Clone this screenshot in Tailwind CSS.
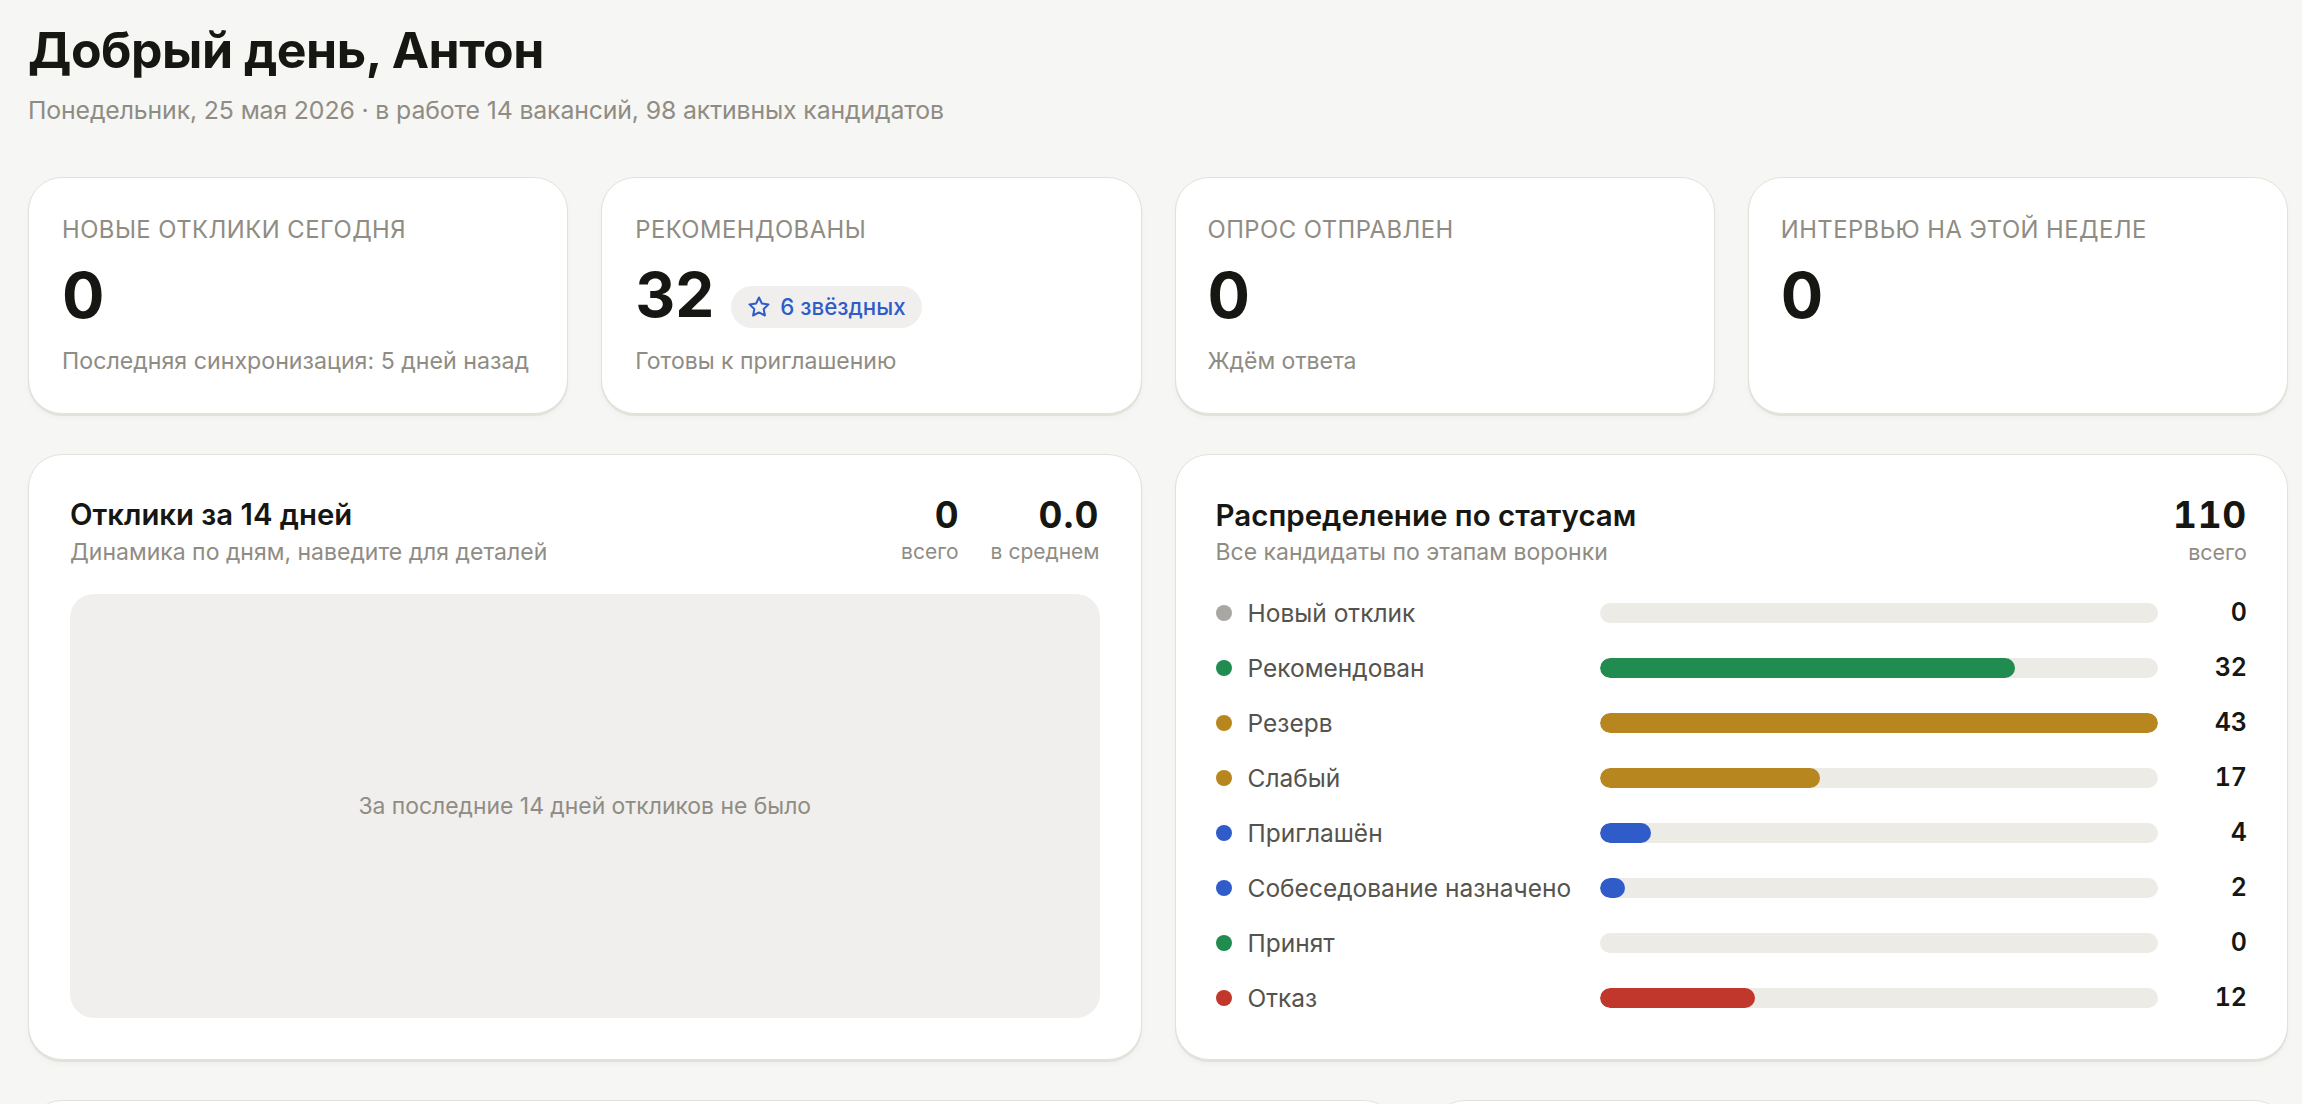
<!doctype html>
<html lang="ru"><head><meta charset="utf-8"><script src="https://cdn.jsdelivr.net/npm/@tailwindcss/browser@4"></script><title>Дашборд</title></head>
<body class="bg-[#f6f6f4] h-[1104px] overflow-hidden font-['Inter','Noto_Sans',sans-serif] text-[#161612]">
<main class="h-[1104px] overflow-hidden pl-[28px] pr-[14px]">
<header class="pt-[23px] h-[177px]">
<h1 class="text-[50px] leading-[54px] font-bold tracking-[-0.01em]">Добрый день, Антон</h1>
<p class="mt-[17px] text-[24.8px] leading-[32px] text-[#8f8c84] tracking-[-0.005em]">Понедельник, 25 мая 2026 · в работе 14 вакансий, 98 активных кандидатов</p>
</header>
<section class="grid grid-cols-4 gap-[33px]">
<div class="h-[237px] rounded-[34px] bg-white border-[1.5px] border-[#e3e1da] shadow-[0_2px_0_#e3e1da,0_4px_6px_rgba(0,0,0,0.03)] pl-[33px] pr-[30px] pt-[37px]">
<div class="text-[23.8px] leading-[30px] tracking-[0.02em] text-[#8f8c84]">НОВЫЕ ОТКЛИКИ СЕГОДНЯ</div>
<div class="mt-[14px] h-[72px] text-[63px] leading-[72px] font-bold">0</div>
<div class="mt-[15px] text-[23.2px] leading-[30px] text-[#8f8c84]">Последняя синхронизация: 5 дней назад</div>
</div>
<div class="h-[237px] rounded-[34px] bg-white border-[1.5px] border-[#e3e1da] shadow-[0_2px_0_#e3e1da,0_4px_6px_rgba(0,0,0,0.03)] pl-[33px] pr-[30px] pt-[37px]">
<div class="text-[23.8px] leading-[30px] tracking-[0.02em] text-[#8f8c84]">РЕКОМЕНДОВАНЫ</div>
<div class="mt-[14px] h-[72px] flex items-center gap-[17px]">
<span class="text-[62px] leading-[72px] font-bold">32</span>
<span class="mt-[24px] h-[42px] rounded-full bg-[#f0efed] px-[16px] flex items-center gap-[9px] text-[22.3px] font-medium text-[#2f5cc8] whitespace-nowrap">
<svg class="w-[24px] h-[24px]" viewBox="0 0 24 24" fill="none" stroke="#2f5cc8" stroke-width="2" stroke-linejoin="round"><path d="M12 2.500l2.900 6 6.600.9-4.800 4.600 1.200 6.500L12 17.400l-5.900 3.100 1.200-6.500L2.500 9.400l6.600-.9z"/></svg>6 звёздных</span>
</div>
<div class="mt-[15px] text-[23px] leading-[30px] text-[#8f8c84]">Готовы к приглашению</div>
</div>
<div class="h-[237px] rounded-[34px] bg-white border-[1.5px] border-[#e3e1da] shadow-[0_2px_0_#e3e1da,0_4px_6px_rgba(0,0,0,0.03)] px-[32px] pt-[37px]">
<div class="text-[23.8px] leading-[30px] tracking-[0.02em] text-[#8f8c84]">ОПРОС ОТПРАВЛЕН</div>
<div class="mt-[14px] h-[72px] text-[63px] leading-[72px] font-bold">0</div>
<div class="mt-[15px] text-[23px] leading-[30px] text-[#8f8c84]">Ждём ответа</div>
</div>
<div class="h-[237px] rounded-[34px] bg-white border-[1.5px] border-[#e3e1da] shadow-[0_2px_0_#e3e1da,0_4px_6px_rgba(0,0,0,0.03)] px-[32px] pt-[37px]">
<div class="text-[23.8px] leading-[30px] tracking-[0.02em] text-[#8f8c84]">ИНТЕРВЬЮ НА ЭТОЙ НЕДЕЛЕ</div>
<div class="mt-[14px] h-[72px] text-[63px] leading-[72px] font-bold">0</div>
</div>
</section>
<section class="mt-[40px] grid grid-cols-2 gap-[33px]">
<div class="h-[606px] rounded-[34px] bg-white border-[1.5px] border-[#e3e1da] shadow-[0_2px_0_#e3e1da,0_4px_6px_rgba(0,0,0,0.03)] px-[41px] pt-[42px] flex flex-col">
<div class="flex justify-between">
<div>
<h2 class="text-[29.300px] leading-[36px] font-semibold">Отклики за 14 дней</h2>
<p class="mt-[4px] text-[23px] leading-[30px] text-[#8f8c84]">Динамика по дням, наведите для деталей</p>
</div>
<div class="flex gap-[32px] text-right">
<div><div class="text-[37px] leading-[36px] font-bold tabular-nums">0</div><div class="mt-[4px] text-[21px] leading-[30px] text-[#8f8c84]">всего</div></div>
<div><div class="text-[37px] leading-[36px] font-bold tabular-nums tracking-[0.03em]">0.0</div><div class="mt-[4px] text-[21px] leading-[30px] text-[#8f8c84]">в среднем</div></div>
</div>
</div>
<div class="mt-[27px] h-[424px] rounded-[24px] bg-[#f0efed] flex items-center justify-center text-[22.900px] text-[#8f8c84]">За последние 14 дней откликов не было</div>
</div>
<div class="h-[606px] rounded-[34px] bg-white border-[1.5px] border-[#e3e1da] shadow-[0_2px_0_#e3e1da,0_4px_6px_rgba(0,0,0,0.03)] px-[40px] pt-[42px]">
<div class="flex justify-between">
<div>
<h2 class="text-[29.500px] leading-[36px] font-semibold">Распределение по статусам</h2>
<p class="mt-[4px] text-[23px] leading-[30px] text-[#8f8c84]">Все кандидаты по этапам воронки</p>
</div>
<div class="text-right"><div class="text-[37px] leading-[36px] font-bold tabular-nums tracking-[0.02em]">110</div><div class="mt-[4px] text-[21.500px] leading-[30px] text-[#8f8c84]">всего</div></div>
</div>
<ul class="mt-[36px] flex flex-col gap-[35px] text-[24.500px] text-[#55534d]">
<li class="h-[20px] flex items-center"><span class="w-[16px] h-[16px] rounded-full bg-[#a8a7a2] mr-[16px]"></span><span class="w-[352px] whitespace-nowrap">Новый отклик</span><span class="w-[558px] h-[20px] rounded-full bg-[#ecebe6]"></span><span class="flex-1 text-right text-[25px] font-semibold text-[#161612] tabular-nums">0</span></li>
<li class="h-[20px] flex items-center"><span class="w-[16px] h-[16px] rounded-full bg-[#218c50] mr-[16px]"></span><span class="w-[352px] whitespace-nowrap">Рекомендован</span><span class="w-[558px] h-[20px] rounded-full bg-[#ecebe6] overflow-hidden"><span class="block h-full rounded-full bg-[#218c50]" style="width:74.4%"></span></span><span class="flex-1 text-right text-[25px] font-semibold text-[#161612] tabular-nums">32</span></li>
<li class="h-[20px] flex items-center"><span class="w-[16px] h-[16px] rounded-full bg-[#b8861e] mr-[16px]"></span><span class="w-[352px] whitespace-nowrap">Резерв</span><span class="w-[558px] h-[20px] rounded-full bg-[#ecebe6] overflow-hidden"><span class="block h-full rounded-full bg-[#b8861e]" style="width:100%"></span></span><span class="flex-1 text-right text-[25px] font-semibold text-[#161612] tabular-nums">43</span></li>
<li class="h-[20px] flex items-center"><span class="w-[16px] h-[16px] rounded-full bg-[#b8861e] mr-[16px]"></span><span class="w-[352px] whitespace-nowrap">Слабый</span><span class="w-[558px] h-[20px] rounded-full bg-[#ecebe6] overflow-hidden"><span class="block h-full rounded-full bg-[#b8861e]" style="width:39.6%"></span></span><span class="flex-1 text-right text-[25px] font-semibold text-[#161612] tabular-nums">17</span></li>
<li class="h-[20px] flex items-center"><span class="w-[16px] h-[16px] rounded-full bg-[#2f5cc8] mr-[16px]"></span><span class="w-[352px] whitespace-nowrap">Приглашён</span><span class="w-[558px] h-[20px] rounded-full bg-[#ecebe6] overflow-hidden"><span class="block h-full rounded-full bg-[#2f5cc8]" style="width:9.3%"></span></span><span class="flex-1 text-right text-[25px] font-semibold text-[#161612] tabular-nums">4</span></li>
<li class="h-[20px] flex items-center"><span class="w-[16px] h-[16px] rounded-full bg-[#2f5cc8] mr-[16px]"></span><span class="w-[352px] whitespace-nowrap">Собеседование назначено</span><span class="w-[558px] h-[20px] rounded-full bg-[#ecebe6] overflow-hidden"><span class="block h-full rounded-full bg-[#2f5cc8]" style="width:4.65%"></span></span><span class="flex-1 text-right text-[25px] font-semibold text-[#161612] tabular-nums">2</span></li>
<li class="h-[20px] flex items-center"><span class="w-[16px] h-[16px] rounded-full bg-[#218c50] mr-[16px]"></span><span class="w-[352px] whitespace-nowrap">Принят</span><span class="w-[558px] h-[20px] rounded-full bg-[#ecebe6]"></span><span class="flex-1 text-right text-[25px] font-semibold text-[#161612] tabular-nums">0</span></li>
<li class="h-[20px] flex items-center"><span class="w-[16px] h-[16px] rounded-full bg-[#c1372b] mr-[16px]"></span><span class="w-[352px] whitespace-nowrap">Отказ</span><span class="w-[558px] h-[20px] rounded-full bg-[#ecebe6] overflow-hidden"><span class="block h-full rounded-full bg-[#c1372b]" style="width:27.9%"></span></span><span class="flex-1 text-right text-[25px] font-semibold text-[#161612] tabular-nums">12</span></li>
</ul>
</div>
</section>
<section class="mt-[40px] grid grid-cols-[1.6fr_1fr] gap-[33px]">
<div class="h-[200px] rounded-[34px] bg-white border-[1.5px] border-[#e3e1da]"></div>
<div class="h-[200px] rounded-[34px] bg-white border-[1.5px] border-[#e3e1da]"></div>
</section>
</main>
</body></html>
